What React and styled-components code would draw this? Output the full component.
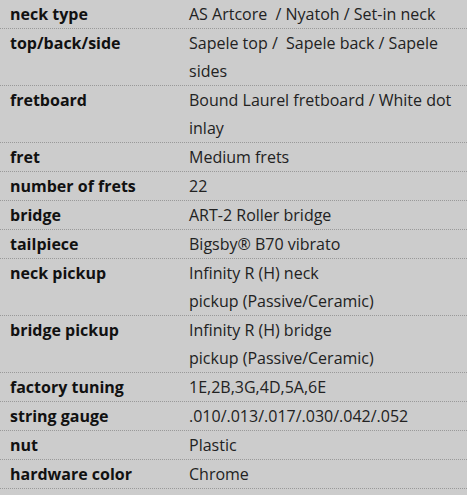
import React from "react";
import styled, { createGlobalStyle } from "styled-components";

const GlobalStyle = createGlobalStyle`
  html, body {
    margin: 0;
    padding: 0;
    background: #cccccc;
  }
`

// non-breaking spaces keep the pickup descriptions wrapping like the source page
const specs = [
  ["neck type", "AS Artcore\u00a0 / Nyatoh / Set-in neck"],
  ["top/back/side", "Sapele top /\u00a0 Sapele back / Sapele sides"],
  ["fretboard", "Bound Laurel fretboard / White dot inlay"],
  ["fret", "Medium frets"],
  ["number of frets", "22"],
  ["bridge", "ART-2 Roller bridge"],
  ["tailpiece", "Bigsby® B70 vibrato"],
  ["neck pickup", "Infinity R (H) neck pickup\u00a0(Passive/Ceramic)"],
  ["bridge pickup", "Infinity R (H) bridge pickup\u00a0(Passive/Ceramic)"],
  ["factory tuning", "1E,2B,3G,4D,5A,6E"],
  ["string gauge", ".010/.013/.017/.030/.042/.052"],
  ["nut", "Plastic"],
  ["hardware color", "Chrome"],
]

const SpecTable = styled.dl`
  margin: 0;
  width: 467px;
  font-family: "Open Sans", sans-serif;
  font-size: 16px;
  line-height: 28px;
  color: #222;
`

const Row = styled.div`
  display: grid;
  grid-template-columns: 189px 1fr;
  border-bottom: 1px dotted #999;
`

const Label = styled.dt`
  padding-left: 10px;
  font-weight: 700;
  color: #111;
`

const Value = styled.dd`
  margin: 0;
  padding-right: 10px;
  color: #222;
`

const App = () => (
  <>
    <GlobalStyle />
    <SpecTable>
      {specs.map(([label, value]) => (
        <Row key={label}>
          <Label>{label}</Label>
          <Value>{value}</Value>
        </Row>
      ))}
    </SpecTable>
  </>
)

export default App
